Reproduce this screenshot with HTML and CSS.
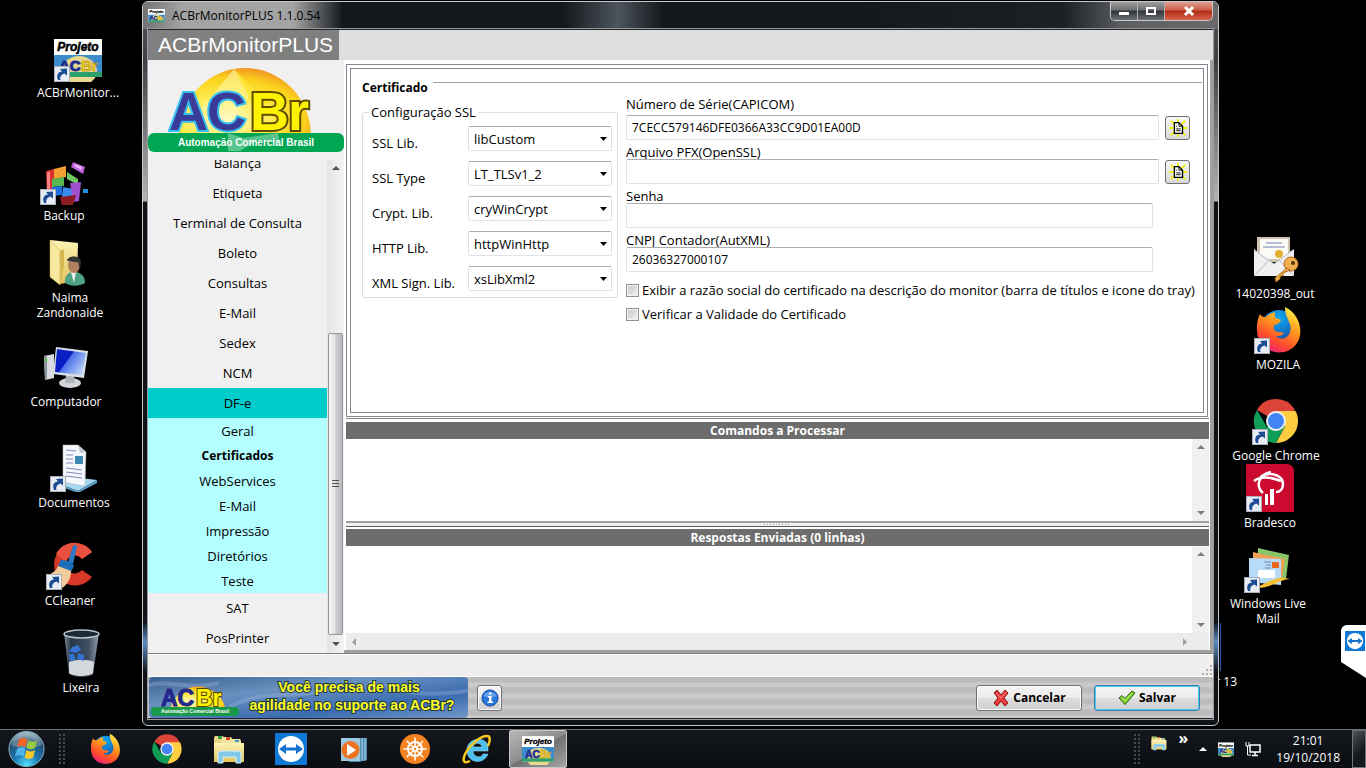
FILE: index.html
```
<!DOCTYPE html>
<html lang="pt-br">
<head>
    <meta charset="utf-8" />
    <title>ACBrMonitorPLUS 1.1.0.54</title>
    <link rel="stylesheet" href="styles.css">
</head>
<body>

    <svg class="sprite" width="0" height="0" aria-hidden="true">
        <defs>
            <radialGradient id="gSun" cx="0.35" cy="0.75" r="0.8">
                <stop offset="0" stop-color="#fffbc8" />
                <stop offset="0.45" stop-color="#ffe94a" />
                <stop offset="0.75" stop-color="#fbd21c" />
                <stop offset="1" stop-color="#f08a24" />
            </radialGradient>
            <linearGradient id="gFox" x1="0.8" y1="0" x2="0.3" y2="1">
                <stop offset="0" stop-color="#fff44a" />
                <stop offset="0.4" stop-color="#ff9a1c" />
                <stop offset="0.75" stop-color="#ff4a2c" />
                <stop offset="1" stop-color="#e8207a" />
            </linearGradient>
            <radialGradient id="gGlobe" cx="0.5" cy="0.2" r="0.9">
                <stop offset="0" stop-color="#10a8f0" />
                <stop offset="1" stop-color="#1a2f8c" />
            </radialGradient>
            <linearGradient id="gFolder" x1="0" y1="0" x2="0" y2="1">
                <stop offset="0" stop-color="#fdf3b4" />
                <stop offset="1" stop-color="#e4c45c" />
            </linearGradient>
            <radialGradient id="gOrb" cx="0.5" cy="0.95" r="0.95">
                <stop offset="0" stop-color="#4fe0ff" />
                <stop offset="0.4" stop-color="#1b74ae" />
                <stop offset="0.75" stop-color="#24506e" />
                <stop offset="1" stop-color="#a8c0cc" />
            </radialGradient>
            <linearGradient id="gScreen" x1="0" y1="0" x2="1" y2="0.6">
                <stop offset="0" stop-color="#1026c8" />
                <stop offset="0.48" stop-color="#0a1cc4" />
                <stop offset="0.5" stop-color="#4a70e8" />
                <stop offset="1" stop-color="#b4ccf8" />
            </linearGradient>
            <linearGradient id="gSky" x1="0" y1="0" x2="1" y2="1">
                <stop offset="0" stop-color="#3a6090" />
                <stop offset="0.35" stop-color="#6a90c0" />
                <stop offset="0.7" stop-color="#3a6cb0" />
                <stop offset="1" stop-color="#7498c8" />
            </linearGradient>
            <linearGradient id="gGlass" x1="0" y1="0" x2="1" y2="0">
                <stop offset="0" stop-color="#8c9aa8" />
                <stop offset="0.2" stop-color="#2c3c50" />
                <stop offset="0.7" stop-color="#44586c" />
                <stop offset="1" stop-color="#a4b0bc" />
            </linearGradient>
        </defs>

        <symbol id="shortcut" viewBox="0 0 16 16">
            <rect x="0.5" y="0.5" width="15" height="15" fill="#e8ecf2" stroke="#a8b0bc" />
            <path d="M4 14C2 9 4 6 8 5.500L6 3L13 2.500L13 9.500L10.500 7.500C7 8.500 5.500 11 6.500 14Z" fill="#1c4c94" />
        </symbol>

        <symbol id="projeto" viewBox="0 0 48 38">
            <rect width="48" height="38" fill="#fff" />
            <rect y="16" width="48" height="18" fill="#3c8ccc" />
            <ellipse cx="25" cy="32" rx="18" ry="15" fill="#e8d890" />
            <rect y="33" width="48" height="5" fill="#2ea06c" />
            <rect width="48" height="16" fill="#fff" />
            <text x="24" y="12" class="svgText" font-style="italic" font-size="12" text-anchor="middle" fill="#000" stroke="#000" stroke-width="0.500">Projeto</text>
            <text x="5" y="32" class="svgText" font-size="15" fill="#1c2c90" stroke="#1c2c90">AC</text>
            <text x="27" y="32" class="svgText" font-size="15" fill="#ffd820" stroke="#907010" stroke-width="0.500">Br</text>
        </symbol>

        <symbol id="backup" viewBox="0 0 48 48">
            <path d="M6 14L14 12V42L7 38Z" fill="#d83030" />
            <path d="M7 16L10 14V38L7 36Z" fill="#ff8080" />
            <path d="M14 12L26 9V20L14 22Z" fill="#f4a030" />
            <path d="M12 22L24 20V29L12 30Z" fill="#58b850" />
            <path d="M27 15L38 22V28L27 22Z" fill="#70c860" />
            <path d="M12 30L22 29V38L12 39Z" fill="#2070e0" />
            <path d="M23 30L33 32L31 42L22 40Z" fill="#3c8cf0" />
            <path d="M30 26L41 25L39 44L33 45Z" fill="#a050d0" />
            <path d="M20 40L36 38L33 48L22 49Z" fill="#8c1c20" />
            <path d="M33 5L45 10L43 17L31 10Z" fill="#c060e0" />
            <path d="M35 7L42 10L41 13L34 9Z" fill="#e8b8f8" />
            <rect x="43" y="32" width="6" height="4" fill="#1c94dc" />
        </symbol>

        <symbol id="userFolder" viewBox="0 0 48 48">
            <path d="M4 1L32 4L31 42L14 45L4 34Z" fill="url(#gFolder)" />
            <path d="M4 1L14 12V46L4 38Z" fill="#f8e8a0" stroke="#c8a850" stroke-width="0.500" />
            <path d="M14 12L18 10V28L14 46Z" fill="#d8b850" />
            <path d="M19 44C18 36 23 33 28 33C35 33 39 37 39 44C32 48 24 47 19 44Z" fill="#50a084" />
            <path d="M25 33L28 44L30 33Z" fill="#f0f0f0" />
            <ellipse cx="28" cy="26" rx="6" ry="8" fill="#b08060" />
            <path d="M21 22C22 16 34 16 35 23L34 30L32 23C28 24 24 21 21 22Z" fill="#333" />
        </symbol>

        <symbol id="computer" viewBox="0 0 48 48">
            <path d="M2 13L12 11V35L3 37Z" fill="#d8dce0" />
            <path d="M2 13L5 12V36L3 37Z" fill="#8c949c" />
            <circle cx="4" cy="17" r="1.500" fill="#50c840" />
            <ellipse cx="28" cy="40" rx="11" ry="5" fill="#d4d8dc" />
            <path d="M24 32H32L33 40H23Z" fill="#b0b4b8" />
            <path d="M14 4L46 8L42 35L11 31Z" fill="#d8e0e8" />
            <path d="M15 6L44 10L40 32L13 29Z" fill="url(#gScreen)" />
        </symbol>

        <symbol id="documents" viewBox="0 0 48 48">
            <path d="M4 38L22 33L47 36L28 47Z" fill="#a8d8f0" />
            <path d="M4 38L28 47L47 36V39L28 49L4 40Z" fill="#5aa0c8" />
            <path d="M13 1L28 1L36 8L35 42L13 38Z" fill="#f4f8fc" stroke="#b0b8c0" stroke-width="0.500" />
            <path d="M28 1L30 9L36 8Z" fill="#c4ccd4" />
            <path d="M16 6L26 7M16 11H23M16 15H23M16 19H23M16 24L32 26M16 28L32 30M16 32L32 34" stroke="#8488b8" stroke-width="1.200" />
            <rect x="25" y="12" width="8" height="8" fill="#3c88b4" />
        </symbol>

        <symbol id="ccleaner" viewBox="0 0 48 48">
            <path d="M46 10A21 21 0 1 0 46 35L36 28A9 9 0 1 1 36 17Z" fill="#d83828" />
            <path d="M46 10A21 21 0 0 0 10 12L20 20A9 9 0 0 1 36 17Z" fill="#e85040" />
            <path d="M27 4C29 2 31 3 31 5L27 22L22 20Z" fill="#2c78c0" />
            <path d="M15 18C20 18 26 20 28 24L25 30L12 24Z" fill="#1c70b8" />
            <path d="M12 24L25 29C25 36 22 42 16 46C10 42 4 36 0 33C6 32 10 29 12 24Z" fill="#f4cc9c" />
        </symbol>

        <symbol id="trash" viewBox="0 0 48 48">
            <path d="M7 4L12 45C16 49 32 49 36 45L42 4Z" fill="url(#gGlass)" opacity="0.900" />
            <path d="M12 33C18 30 31 30 37 33L36 44C32 48 16 48 12 44Z" fill="#d4d8dc" />
            <ellipse cx="24.500" cy="5" rx="17.500" ry="4" fill="#1c2834" stroke="#b8c4cc" stroke-width="1.500" />
            <path d="M15 18L21 16L24 21L19 24L12 23ZM21 24L27 26L27 32L20 30ZM12 25L17 25L19 31L13 32Z" fill="#3474d0" />
        </symbol>

        <symbol id="certificate" viewBox="0 0 48 48">
            <rect x="6" y="2" width="33" height="25" fill="#d0c4b0" />
            <rect x="9" y="4" width="28" height="20" fill="#fcfaf4" />
            <path d="M15 8H31M12 12H34" stroke="#9ca8d0" stroke-width="1.500" />
            <path d="M3 14L23 29L43 14V41H3Z" fill="#f0f0f2" />
            <path d="M3 41L18 25M43 41L28 25M3 15L23 29L42 15" stroke="#b8bcc0" fill="none" />
            <circle cx="28" cy="19" r="4" fill="#e0b030" />
            <circle cx="40" cy="29" r="7" fill="#f0b050" stroke="#a86818" />
            <path d="M36 33L24 43L25 47L29 44V41L32 41V38L39 35Z" fill="#f0b050" stroke="#a86818" />
            <circle cx="42" cy="28" r="2" fill="#503810" />
        </symbol>

        <symbol id="firefox" viewBox="0 0 48 48">
            <circle cx="25" cy="23" r="19" fill="url(#gGlobe)" />
            <path d="M31 1C46 8 50 27 43 37C34 51 12 49 5 34C2 26 2 16 6 8C8 11 9 11 12 11C15 8 18 7 21 6C21 9 20 11 22 12L27 14C25 18 22 19 20 19C19 24 21 26 26 26L30 27C27 31 24 30 22 30C26 35 34 33 36 26C39 17 31 14 31 1Z" fill="url(#gFox)" />
        </symbol>

        <symbol id="chrome" viewBox="0 0 48 48">
            <path d="M24 24L4.900 13A22 22 0 0 1 43.100 13Z" fill="#db4437" />
            <path d="M24 14H43.600A22 22 0 0 1 24 46L33 29Z" fill="#ffcd40" />
            <path d="M4.900 13L15 30L33 29L24 46A22 22 0 0 1 4.900 13Z" fill="#0f9d58" />
            <circle cx="24" cy="24" r="10" fill="#f1f1f1" />
            <circle cx="24" cy="24" r="8" fill="#4285f4" />
        </symbol>

        <symbol id="bradesco" viewBox="0 0 48 48">
            <path d="M0 0H40Q48 0 48 8V48H0Z" fill="#cc092f" />
            <path d="M14 14C18 7 37 9 37 20C37 25 34 28 30 28M17 29C9 22 13 10 25 8M8 17C15 12 25 13 35 17" fill="none" stroke="#fff" stroke-width="2.500" />
            <path d="M19 30H22V41H19ZM24 25H28V41H24Z" fill="#fff" />
        </symbol>

        <symbol id="liveMail" viewBox="0 0 48 48">
            <path d="M14 3L45 10L42 34L14 30Z" fill="#88c468" />
            <path d="M9 7L41 14L37 38L9 32Z" fill="#f0a054" />
            <path d="M5 13L37 14V40L5 37Z" fill="#b8dcf8" />
            <rect x="14" y="25" width="17" height="8" fill="#fff" />
            <rect x="28" y="17" width="7" height="6" fill="#e86820" />
            <path d="M20 17H27M22 20H27M21 23H27" stroke="#6c88a8" />
            <path d="M14 41C26 38 30 30 46 34C36 34 30 42 14 43Z" fill="#f8c030" />
        </symbol>

        <symbol id="teamviewer" viewBox="0 0 32 32">
            <rect width="32" height="32" fill="#0e78d4" />
            <circle cx="16" cy="16" r="13" fill="#fff" />
            <path d="M4 16L11 11V14.500H21V11L28 16L21 21V17.500H11V21Z" fill="#1272cc" />
        </symbol>

        <symbol id="explorer" viewBox="0 0 32 32">
            <path d="M1 5L2 3H10L11 5V28H1Z" fill="#e8d888" />
            <path d="M9 4H18L19 6H27L28 8V28H9Z" fill="#f0e4a0" />
            <path d="M5 3H9V6H5Z" fill="#30a040" /><path d="M13 4H17V7H13Z" fill="#d04828" /><path d="M22 7H26V9H22Z" fill="#38a0c8" />
            <path d="M1 10H31V29H1Z" fill="url(#gFolder)" />
            <path d="M5 30V20Q5 18 8 18H24Q28 18 28 20V30H23V24H10V30Z" fill="#80c8e8" stroke="#d4f0fc" />
        </symbol>

        <symbol id="mediaPlayer" viewBox="0 0 32 32">
            <path d="M18 5L30 5V27L22 29H12Z" fill="#4c8cb4" />
            <path d="M25 5V28M28 5V28" stroke="#b0d8ec" />
            <rect x="4" y="5" width="19" height="23" fill="#9cc8e0" />
            <circle cx="13.500" cy="17" r="9" fill="#ec7420" />
            <path d="M10 11L19 17L10 23Z" fill="#fff" />
        </symbol>

        <symbol id="wheel" viewBox="0 0 32 32">
            <circle cx="16" cy="16" r="15" fill="#f58220" />
            <circle cx="16" cy="16" r="7" fill="none" stroke="#fff" stroke-width="2" />
            <path d="M16 5V27M5 16H27M8.200 8.200L23.800 23.800M23.800 8.200L8.200 23.800" stroke="#fff" stroke-width="1.500" stroke-linecap="round" />
            <circle cx="16" cy="16" r="3" fill="#fff" /><circle cx="16" cy="16" r="1.200" fill="#f58220" />
        </symbol>

        <symbol id="iexplore" viewBox="0 0 32 32">
            <path d="M27 18H12C12 24 20 26 22 21H27C23 32 6 31 6 17C6 5 24 2 27 13ZM12 14H21C20 9 13 9 12 14Z" fill="#4cc0ee" stroke="#a0e4fc" stroke-width="0.500" />
            <path d="M27 13C29 8 30 3 26 3C20 2 6 14 3 24C2 28 3 31 9 28" fill="none" stroke="#f8c820" stroke-width="2.500" />
        </symbol>

        <symbol id="windowsFlag" viewBox="0 0 40 40">
            <circle cx="20" cy="20" r="18.500" fill="url(#gOrb)" stroke="#88b0c4" />
            <path d="M4 16A16.500 16.500 0 0 1 36 16C26 20 14 20 4 16Z" fill="#fff" opacity="0.250" />
            <path d="M12 10C15 8 18 8 21 10L19 18C16 16 13 16 10 18Z" fill="#f06428" />
            <path d="M22 11C25 13 28 13 31 11L29 19C26 21 23 21 20 19Z" fill="#98cc3c" />
            <path d="M10 20C13 18 16 18 19 20L17 28C14 26 11 26 8 28Z" fill="#50b4ec" />
            <path d="M20 21C23 23 26 23 29 21L27 29C24 31 21 31 18 29Z" fill="#fcc828" />
        </symbol>

        <symbol id="newDoc" viewBox="0 0 20 20">
            <path d="M2 2L18 18M18 2L2 18M10 0V20M0 10H20" stroke="#f0f000" stroke-width="2" />
            <path d="M6 4H11L15 8V16H6Z" fill="#fff" stroke="#000" stroke-width="1.500" />
            <path d="M11 4V8H15M8 8H9M8 11H13M8 13H13" stroke="#000" fill="none" />
        </symbol>
    </svg>

    <div id="desktop">
        <a href="#" class="icon acbr">
            <svg><use href="#projeto" /></svg>
            <svg class="arrow"><use href="#shortcut" /></svg>
            <span>ACBrMonitor...</span>
        </a>
        <a href="#" class="icon backup">
            <svg><use href="#backup" /></svg>
            <svg class="arrow"><use href="#shortcut" /></svg>
            <span>Backup</span>
        </a>
        <a href="#" class="icon naima">
            <svg><use href="#userFolder" /></svg>
            <span>Naima Zandonaide</span>
        </a>
        <a href="#" class="icon computador">
            <svg><use href="#computer" /></svg>
            <span>Computador</span>
        </a>
        <a href="#" class="icon documentos">
            <svg><use href="#documents" /></svg>
            <svg class="arrow"><use href="#shortcut" /></svg>
            <span>Documentos</span>
        </a>
        <a href="#" class="icon ccleaner">
            <svg><use href="#ccleaner" /></svg>
            <svg class="arrow"><use href="#shortcut" /></svg>
            <span>CCleaner</span>
        </a>
        <a href="#" class="icon lixeira">
            <svg><use href="#trash" /></svg>
            <span>Lixeira</span>
        </a>

        <a href="#" class="icon out">
            <svg><use href="#certificate" /></svg>
            <span>14020398_out</span>
        </a>
        <a href="#" class="icon mozila">
            <svg><use href="#firefox" /></svg>
            <svg class="arrow"><use href="#shortcut" /></svg>
            <span>MOZILA</span>
        </a>
        <a href="#" class="icon chrome">
            <svg><use href="#chrome" /></svg>
            <svg class="arrow"><use href="#shortcut" /></svg>
            <span>Google Chrome</span>
        </a>
        <a href="#" class="icon bradesco">
            <svg><use href="#bradesco" /></svg>
            <svg class="arrow"><use href="#shortcut" /></svg>
            <span>Bradesco</span>
        </a>
        <a href="#" class="icon livemail">
            <svg><use href="#liveMail" /></svg>
            <svg class="arrow"><use href="#shortcut" /></svg>
            <span>Windows Live Mail</span>
        </a>
        <a href="#" class="icon hiddenIcon">
            <i></i>
            <span>r 13</span>
        </a>

        <div id="tvTab">
            <svg viewBox="0 0 32 32"><use href="#teamviewer" /></svg>
        </div>

        <div id="win">
            <div class="titleBar">
                <svg class="titleIcon"><use href="#projeto" /></svg>
                <span>ACBrMonitorPLUS 1.1.0.54</span>
                <div class="winButtons">
                    <button type="button" title="Minimizar"><svg viewBox="0 0 14 12"><rect x="2" y="7" width="10" height="3" fill="#fff" /></svg></button>
                    <button type="button" title="Maximizar"><svg viewBox="0 0 14 12"><path d="M3 3H11V9H3Z" fill="none" stroke="#fff" stroke-width="2" /></svg></button>
                    <button type="button" title="Fechar" class="close"><svg viewBox="0 0 14 12"><path d="M3 2L11 10M11 2L3 10" stroke="#fff" stroke-width="3" /></svg></button>
                </div>
            </div>

            <div class="client">
                <div class="appHeader"><h1>ACBrMonitorPLUS</h1></div>

                <div class="content">
                    <div class="sidebar">
                        <svg class="logo" viewBox="0 0 196 92">
                            <path d="M31 76A66 68 0 0 1 163 76Z" fill="url(#gSun)" />
                            <path d="M86 9L106 30L90 52L52 50L86 9Z" fill="#fff9a8" opacity="0.600" />
                            <path d="M86 9L106 30L138 33L108 50Z" fill="#ffe000" opacity="0.500" />
                            <rect y="73" width="196" height="19" rx="6" fill="#00a651" />
                            <path d="M80 73L95 78L130 73L132 83L110 80L92 91L80 91Z" fill="#fff" opacity="0.350" />
                            <g class="svgText" font-size="54" fill="#3a3a98" stroke="#38c0f0" stroke-width="4" paint-order="stroke">
                                <text x="21" y="70">A</text>
                                <text x="59" y="70">C</text>
                            </g>
                            <g class="svgText" font-size="54" fill="#fff200" stroke="#5c4c00" stroke-width="4" paint-order="stroke">
                                <text x="102" y="70">B</text>
                                <text x="140" y="70">r</text>
                            </g>
                            <text x="98" y="86" class="svgText" font-size="10" fill="#fff" text-anchor="middle">Automação Comercial Brasil</text>
                        </svg>
                        <div class="menuBox">
                            <nav>
                                <a href="#">Balança</a>
                                <a href="#">Etiqueta</a>
                                <a href="#">Terminal de Consulta</a>
                                <a href="#">Boleto</a>
                                <a href="#">Consultas</a>
                                <a href="#">E-Mail</a>
                                <a href="#">Sedex</a>
                                <a href="#">NCM</a>
                                <a href="#" class="active">DF-e</a>
                                <a href="#" class="sub">Geral</a>
                                <a href="#" class="sub current">Certificados</a>
                                <a href="#" class="sub">WebServices</a>
                                <a href="#" class="sub">E-Mail</a>
                                <a href="#" class="sub">Impressão</a>
                                <a href="#" class="sub">Diretórios</a>
                                <a href="#" class="sub">Teste</a>
                                <a href="#">SAT</a>
                                <a href="#">PosPrinter</a>
                            </nav>
                            <div class="menuScroll">
                                <i class="up"></i>
                                <div class="thumb"></div>
                                <i class="down"></i>
                            </div>
                        </div>
                    </div>

                    <div class="main">
                        <div class="page">
                            <fieldset class="cert">
                                <legend>Certificado</legend>
                                <div class="columns">
                                    <fieldset class="ssl">
                                        <legend>Configuração SSL</legend>
                                        <div class="row">
                                            <label for="sslLib">SSL Lib.</label>
                                            <select id="sslLib"><option>libCustom</option></select>
                                        </div>
                                        <div class="row">
                                            <label for="sslType">SSL Type</label>
                                            <select id="sslType"><option>LT_TLSv1_2</option></select>
                                        </div>
                                        <div class="row">
                                            <label for="cryptLib">Crypt. Lib.</label>
                                            <select id="cryptLib"><option>cryWinCrypt</option></select>
                                        </div>
                                        <div class="row">
                                            <label for="httpLib">HTTP Lib.</label>
                                            <select id="httpLib"><option>httpWinHttp</option></select>
                                        </div>
                                        <div class="row">
                                            <label for="xmlLib">XML Sign. Lib.</label>
                                            <select id="xmlLib"><option>xsLibXml2</option></select>
                                        </div>
                                    </fieldset>

                                    <div class="fields">
                                        <label for="serie">Número de Série(CAPICOM)</label>
                                        <div class="inputRow">
                                            <input id="serie" type="text" value="7CECC579146DFE0366A33CC9D01EA00D" />
                                            <button type="button" title="Selecionar certificado"><svg><use href="#newDoc" /></svg></button>
                                        </div>
                                        <label for="pfx">Arquivo PFX(OpenSSL)</label>
                                        <div class="inputRow">
                                            <input id="pfx" type="text" />
                                            <button type="button" title="Selecionar arquivo"><svg><use href="#newDoc" /></svg></button>
                                        </div>
                                        <label for="senha">Senha</label>
                                        <input id="senha" type="password" class="short" />
                                        <label for="cnpj">CNPJ Contador(AutXML)</label>
                                        <input id="cnpj" type="text" class="short" value="26036327000107" />
                                        <div class="check">
                                            <input id="razao" type="checkbox" />
                                            <label for="razao">Exibir a razão social do certificado na descrição do monitor (barra de títulos e icone do tray)</label>
                                        </div>
                                        <div class="check">
                                            <input id="validade" type="checkbox" />
                                            <label for="validade">Verificar a Validade do Certificado</label>
                                        </div>
                                    </div>
                                </div>
                            </fieldset>
                        </div>

                        <div class="memo">
                            <label for="cmd" class="bar">Comandos a Processar</label>
                            <div class="memoBody">
                                <textarea id="cmd"></textarea>
                                <div class="vScroll"><i class="up"></i><i class="down"></i></div>
                            </div>
                        </div>
                        <div class="splitter"></div>
                        <div class="memo answers">
                            <label for="resp" class="bar">Respostas Enviadas (0 linhas)</label>
                            <div class="memoBody">
                                <textarea id="resp"></textarea>
                                <div class="vScroll"><i class="up"></i><i class="down"></i></div>
                            </div>
                            <div class="hScroll"><i class="left"></i><i class="right"></i></div>
                        </div>
                    </div>
                </div>

                <div class="status">
                    <svg viewBox="0 0 12 12"><path d="M9 1h2v2h-2zM5 5h2v2h-2zM9 5h2v2h-2zM1 9h2v2h-2zM5 9h2v2h-2zM9 9h2v2h-2z" fill="#b4b0b0" /></svg>
                </div>

                <div class="footer">
                    <svg class="banner" viewBox="0 0 319 41">
                        <rect width="319" height="41" rx="4" fill="url(#gSky)" />
                        <path d="M80 30C120 10 140 24 180 12M220 4C250 16 280 20 319 14M0 8C20 2 40 14 70 6" stroke="#a8c0e0" stroke-width="4" fill="none" opacity="0.300" />
                        <path d="M22 30A28 28 0 0 1 76 30Z" fill="url(#gSun)" />
                        <rect x="2" y="30" width="88" height="9" rx="4" fill="#189848" />
                        <text x="12" y="29" class="svgText" font-size="23" fill="#24288c" stroke="#24288c">AC</text>
                        <text x="47" y="29" class="svgText" font-size="23" fill="#fff200" stroke="#504800" stroke-width="2" paint-order="stroke">Br</text>
                        <text x="46" y="36" class="svgText" font-size="5" fill="#fff" text-anchor="middle">Automação Comercial Brasil</text>
                        <g class="svgText" font-size="14" fill="#ffff20" stroke="#203848" stroke-width="2" paint-order="stroke" text-anchor="middle">
                            <text x="200" y="15">Você precisa de mais</text>
                            <text x="203" y="33">agilidade no suporte ao ACBr?</text>
                        </g>
                    </svg>
                    <button type="button" class="info" title="Sobre">
                        <svg viewBox="0 0 18 18">
                            <circle cx="9" cy="9" r="8" fill="#2a78dc" stroke="#1848a0" />
                            <path d="M2.500 7A7 6.500 0 0 1 15.500 7Q9 10 2.500 7Z" fill="#8cbcf4" opacity="0.600" />
                            <path d="M8 3.500H10.500V5.500H8ZM7 7H10.500V12.500H12V14H6.500V12.500H8V8.500H7Z" fill="#fff" />
                        </svg>
                    </button>
                    <button type="button" class="btn cancel">
                        <svg viewBox="0 0 18 18"><path d="M2 4L5 1L9 6L13 1L16 4L12 9L16 14L13 17L9 12L5 17L2 14L6 9Z" fill="#ec3c3c" stroke="#8c1414" /><path d="M4 4L9 9L14 3" stroke="#f89090" fill="none" /></svg>
                        Cancelar
                    </button>
                    <button type="button" class="btn save">
                        <svg viewBox="0 0 18 18"><path d="M1 9L4 6.500L7 9.500L14 2L17 4L7 15.500Z" fill="#7cd428" stroke="#2c5c10" /><path d="M4 8.500L7 11.500L14 4" stroke="#c8f490" fill="none" /></svg>
                        Salvar
                    </button>
                </div>
            </div>
        </div>
    </div>

    <div id="taskbar">
        <button type="button" class="start" title="Iniciar"><svg><use href="#windowsFlag" /></svg></button>
        <i class="grip"></i>
        <div class="apps">
            <button type="button" title="Firefox"><svg><use href="#firefox" /></svg></button>
            <button type="button" title="Chrome"><svg><use href="#chrome" /></svg></button>
            <button type="button" title="Explorer"><svg><use href="#explorer" /></svg></button>
            <button type="button" title="TeamViewer"><svg><use href="#teamviewer" /></svg></button>
            <button type="button" title="Media Player"><svg><use href="#mediaPlayer" /></svg></button>
            <button type="button" title="Painel"><svg><use href="#wheel" /></svg></button>
            <button type="button" title="Internet Explorer"><svg><use href="#iexplore" /></svg></button>
            <button type="button" title="ACBrMonitorPLUS" class="running"><svg><use href="#projeto" /></svg></button>
        </div>
        <i class="grip"></i>
        <div class="tray">
            <svg class="small high"><use href="#explorer" /></svg>
            <span class="more">»</span>
            <i class="up"></i>
            <svg class="small"><use href="#projeto" /></svg>
            <svg class="small" viewBox="0 0 16 16"><path d="M5 4H15V11H5ZM10 11V14M7 14.500H13" fill="none" stroke="#fff" stroke-width="1.500" /><path d="M1 1V5H4V1M2.500 5V14H6" fill="none" stroke="#fff" /></svg>
        </div>
        <div class="clock">21:01<br />19/10/2018</div>
        <button type="button" class="showDesktop" title="Mostrar a área de trabalho"></button>
    </div>

</body>
</html>
```
FILE: styles.css
```
* {
    box-sizing: border-box;
}

body {
    margin: 0;
    height: 100vh;
    display: flex;
    flex-direction: column;
    background-color: #000;
    font-family: "Open Sans", "Noto Sans", sans-serif;
    font-size: 12px;
    line-height: 15px;
    color: #000;
    overflow: hidden;
}

a {
    color: inherit;
    text-decoration: none;
}

button, input, select, textarea {
    font: inherit;
    color: inherit;
    margin: 0;
    padding: 0;
}

svg {
    display: block;
    flex: none;
}

.sprite {
    position: absolute;
}

.svgText {
    font-family: "Liberation Sans", Arial, sans-serif;
    font-weight: bold;
}

/* desktop */
#desktop {
    flex: 1;
    position: relative;
    min-height: 0;
}

.icon {
    position: absolute;
    width: 100px;
    display: flex;
    flex-direction: column;
    align-items: center;
    color: #fff;
    text-align: center;
}
    .icon > svg {
        width: 48px;
        height: 48px;
    }
    .icon > svg.arrow {
        position: absolute;
        left: 26px;
        top: 32px;
        width: 16px;
        height: 16px;
    }
    .icon > span {
        margin-top: 3px;
        padding: 0 6px;
    }

.acbr { left: 28px; top: 34px; }
.backup { left: 14px; top: 157px; }
.naima { left: 20px; top: 239px; }
.computador { left: 16px; top: 343px; }
.documentos { left: 24px; top: 444px; }
.ccleaner { left: 20px; top: 542px; }
.lixeira { left: 31px; top: 629px; }
.out { right: 41px; top: 235px; }
.mozila { right: 38px; top: 306px; }
.chrome { right: 40px; top: 397px; }
.bradesco { right: 46px; top: 464px; }
.livemail { right: 48px; top: 545px; }
.hiddenIcon { right: 129px; top: 623px; width: 30px; align-items: flex-end; }
    .hiddenIcon > i {
        width: 17px;
        height: 48px;
        border-left: 1px solid #1c5ca8;
    }
    .hiddenIcon > span { padding: 0; }

#tvTab {
    position: absolute;
    right: 0;
    top: 625px;
    width: 25px;
    height: 53px;
    padding: 6px 0 0 4px;
    background-color: #fff;
    border-radius: 6px 0 0 0;
    clip-path: polygon(0 0, 100% 0, 100% 100%, 0 70%);
}
    #tvTab > svg {
        width: 20px;
        height: 20px;
    }

/* window */
#win {
    position: absolute;
    left: 142px;
    right: 147px;
    top: 1px;
    bottom: 3px;
    display: flex;
    flex-direction: column;
    padding: 0 5px 6px 5px;
    border: 1px solid #c4c8cc;
    border-radius: 6px;
    background: linear-gradient(#54585c 0, #3c4044 60px, #b4b4b4 199px, #101418 200px, #101418 620px, #5c8cc4 640px, #101418 670px);
}

.titleBar {
    display: flex;
    align-items: center;
    height: 27px;
    margin: 0 -5px;
    padding-left: 5px;
    border-radius: 5px 5px 0 0;
    background: linear-gradient(90deg, #707274 0, #a4a4a4 40px, #a4a4a4 150px, #14181c 200px, #14181c 420px, #4c545c 475px, #14181c 520px, #14181c 700px, #1c2024 920px, #5c5e60 980px, #686a6c);
}
    .titleBar > span {
        margin-left: 7px;
    }

.titleIcon {
    width: 17px;
    height: 13px;
}

.winButtons {
    display: flex;
    align-self: flex-start;
    margin-left: auto;
    margin-right: 5px;
    border: 1px solid #c8c8c8;
    border-top: none;
    border-radius: 0 0 5px 5px;
    overflow: hidden;
}
    .winButtons > button {
        display: flex;
        justify-content: center;
        align-items: center;
        width: 27px;
        height: 18px;
        border: none;
        border-right: 1px solid #b0b0b0;
        background: linear-gradient(#9c9ea0, #6c6e70 45%, #303438 50%, #6c7074);
    }
    .winButtons svg {
        width: 14px;
        height: 12px;
    }
    .winButtons > .close {
        width: 47px;
        border-right: none;
        background: linear-gradient(#e0a090, #cc5c48 45%, #b02c14 50%, #d8644c);
    }

.client {
    flex: 1;
    min-height: 0;
    display: flex;
    flex-direction: column;
    background-color: #f0f0f0;
    border: 1px solid #202428;
    border-width: 1px 0;
    outline: 1px solid #989ca0;
}

.appHeader {
    display: flex;
    background-color: #dedede;
}
    .appHeader > h1 {
        margin: 0;
        padding: 0 6px 0 10px;
        background-color: #808080;
        color: #fff;
        font: 21px/30px "Liberation Sans", Arial, sans-serif;
    }

.content {
    flex: 1;
    min-height: 0;
    display: flex;
    font-size: 13px;
    line-height: 16px;
}

/* menu */
.sidebar {
    display: flex;
    flex-direction: column;
    width: 196px;
}

.logo {
    width: 196px;
    height: 92px;
}

.menuBox {
    flex: 1;
    min-height: 0;
    display: flex;
    margin-top: 8px;
}
    .menuBox nav {
        flex: 1;
        display: flex;
        flex-direction: column;
        justify-content: flex-end;
        overflow: hidden;
        text-align: center;
        line-height: 30px;
    }
    .menuBox nav > a {
        flex: none;
    }
    .menuBox nav > .active {
        background-color: #00cccc;
    }
    .menuBox nav > .sub {
        padding-top: 1px;
        background-color: #b3ffff;
        line-height: 24px;
    }
    .menuBox nav > .current {
        font-weight: bold;
        font-size: 12px;
    }

.menuScroll {
    display: flex;
    flex-direction: column;
    justify-content: flex-end;
    align-items: center;
    width: 17px;
    background: linear-gradient(90deg, #e4e4e4, #f4f4f4);
}
    .menuScroll > .up {
        margin: 6px 0 auto 0;
    }
    .menuScroll > .down {
        margin: 7px 0;
    }

.thumb {
    width: 15px;
    height: 302px;
    border: 1px solid #949494;
    border-radius: 2px;
    background:
        repeating-linear-gradient(#505050 0, #505050 1px, transparent 1px, transparent 3px) center / 7px 8px no-repeat,
        linear-gradient(90deg, #f4f4f4, #e4e4e8 45%, #ccccd0 55%, #b8b8bc);
}

i.up, i.down {
    width: 0;
    height: 0;
    border: 4px solid transparent;
    border-top-width: 0;
    border-bottom-color: #505050;
}
i.down {
    border-width: 4px 4px 0 4px;
    border-color: #505050 transparent transparent transparent;
}
i.left, i.right {
    width: 0;
    height: 0;
    border: 4px solid transparent;
    border-left-width: 0;
    border-right-color: #808080;
}
i.right {
    border-width: 4px 0 4px 4px;
    border-color: transparent transparent transparent #808080;
}

/* main */
.main {
    flex: 1;
    min-width: 0;
    display: flex;
    flex-direction: column;
    padding: 4px 1px 0 2px;
    background-color: #fff;
    border-right: 3px solid #a0a0a0;
    border-bottom: 3px solid #a0a0a0;
}

.page {
    flex: 1;
    min-height: 0;
    margin-right: 1px;
    padding: 4px 5px 4px 15px;
    border: 1px solid #828790;
    box-shadow: inset 0 0 0 3px #fff, inset 0 0 0 4px #828790;
}

.cert {
    min-width: 0;
    margin: 0;
    padding: 0 12px 0 0;
    border: none;
    border-top: 1px solid #a0a0a0;
}
    .cert > legend {
        padding: 11px 5px 0 0;
        font-weight: bold;
        font-size: 12px;
    }

.columns {
    display: flex;
    align-items: flex-start;
    gap: 8px;
}

.ssl {
    flex: none;
    width: 256px;
    margin: 8px 0 0 0;
    padding: 6px 5px 6px 9px;
    border: 1px solid #d5dfe5;
    border-radius: 3px;
    display: flex;
    flex-direction: column;
    gap: 10px;
}
    .ssl > legend {
        margin-left: -3px;
        padding: 0 2px;
    }
    .ssl .row {
        display: flex;
        justify-content: space-between;
        align-items: flex-end;
    }

select, .fields input[type=text], .fields input[type=password] {
    height: 25px;
    border: 1px solid #dde3ea;
    border-top-color: #abadb3;
    border-radius: 2px;
    background-color: #fff;
    outline: none;
    padding: 0 5px;
}
.fields input[type=text] {
    font-size: 12px;
}

select {
    width: 144px;
    appearance: none;
    background: #fff url('data:image/svg+xml,<svg xmlns="http://www.w3.org/2000/svg" width="7" height="4"><path d="M0 0h7L3.500 4z"/></svg>') right 4px center no-repeat;
}

.fields {
    flex: 1;
    min-width: 0;
    display: flex;
    flex-direction: column;
}
    .fields > label {
        height: 14px;
        margin-top: 5px;
        line-height: 14px;
        overflow: hidden;
    }
    .fields > label:first-child {
        height: 18px;
        margin-top: 1px;
    }
    .fields > .short {
        margin-right: 37px;
    }

.inputRow {
    display: flex;
    align-items: center;
    gap: 6px;
}
    .inputRow > input {
        flex: 1;
    }
    .inputRow > button {
        display: flex;
        justify-content: center;
        align-items: center;
        width: 25px;
        height: 24px;
        border: 1px solid #707070;
        border-radius: 3px;
        background: linear-gradient(#f8f8f8, #d8d8d8);
    }
    .inputRow svg {
        width: 18px;
        height: 18px;
    }

.check {
    display: flex;
    align-items: center;
    gap: 3px;
    margin-top: 8px;
}
    .check > input {
        flex: none;
        appearance: none;
        width: 13px;
        height: 13px;
        border: 1px solid #8e8f8f;
        background: linear-gradient(135deg, #c0c4c8, #f4f4f4);
        box-shadow: inset 0 0 0 1px #f4f4f4;
    }
    .check > label {
        white-space: nowrap;
    }
    .fields > .check:nth-of-type(3) {
        margin-top: 10px;
    }

.memo {
    display: flex;
    flex-direction: column;
    height: 103px;
    margin-top: 1px;
    padding-top: 3px;
    border-top: 1px solid #828790;
}
    .memo > .bar {
        background-color: #6d6d6d;
        color: #fff;
        font-weight: bold;
        font-size: 12px;
        text-align: center;
        line-height: 17px;
    }

.memoBody {
    flex: 1;
    min-height: 0;
    display: flex;
}
    .memoBody > textarea {
        flex: 1;
        border: none;
        outline: none;
        resize: none;
    }

.answers {
    height: 123px;
    margin-top: 0;
    padding-top: 2px;
    border-top: none;
}

.vScroll {
    display: flex;
    flex-direction: column;
    justify-content: space-between;
    align-items: center;
    width: 17px;
    padding: 6px 0;
    background-color: #f0f0f0;
}

.hScroll {
    display: flex;
    justify-content: space-between;
    align-items: center;
    height: 17px;
    padding: 0 22px 0 6px;
    background-color: #ececec;
}

.memo i {
    opacity: 0.7;
}

.splitter {
    height: 6px;
    border-top: 2px solid #a0a0a0;
    border-bottom: 1px solid #5c5c5c;
    background: repeating-linear-gradient(90deg, #a0a0a0 0, #a0a0a0 1px, transparent 1px, transparent 3px) center / 27px 1px no-repeat #f0f0f0;
}

.status {
    display: flex;
    justify-content: flex-end;
    align-items: flex-end;
    height: 24px;
    border-top: 1px solid #808080;
    border-bottom: 1px solid #fff;
    background-color: #f0eded;
    box-shadow: inset 0 1px #fff;
}
    .status > svg {
        width: 12px;
        height: 12px;
    }

.footer {
    display: flex;
    align-items: center;
    height: 41px;
    padding: 0 13px 0 1px;
    background: repeating-linear-gradient(#bcbcbc 0, #bcbcbc 5px, #cacaca 6px, #cacaca 10px, #b4b4b4 11px);
}

.banner {
    width: 319px;
    height: 41px;
}

.footer button {
    display: flex;
    justify-content: center;
    align-items: center;
    gap: 3px;
    width: 106px;
    height: 26px;
    border: 1px solid #707070;
    border-radius: 3px;
    background: linear-gradient(#f4f4f4, #ebebeb 48%, #dddddd 52%, #cfcfcf);
    box-shadow: inset 0 0 0 1px #fcfcfc;
    font-weight: bold;
}
.footer svg:not(.banner) {
    width: 18px;
    height: 18px;
}
.footer > .info {
    width: 25px;
    margin-left: 9px;
    margin-right: auto;
}
.footer > .save {
    margin-left: 12px;
    border-color: #3c7fb1;
    box-shadow: inset 0 0 0 1px #48c8f0;
}

/* taskbar */
#taskbar {
    display: flex;
    align-items: center;
    height: 39px;
    padding-left: 7px;
    border-top: 1px solid #6c7074;
    background: linear-gradient(#14181e, #0a0e12);
    color: #fff;
}
    #taskbar button {
        display: flex;
        justify-content: center;
        align-items: center;
        border: none;
        background: none;
    }

.start svg {
    width: 39px;
    height: 38px;
}

.grip {
    width: 8px;
    height: 32px;
    margin-left: 12px;
    background: radial-gradient(circle, #484c52 1px, transparent 1px) 0 0 / 4px 4px;
}

.apps {
    flex: 1;
    display: flex;
    margin-left: 9px;
}
    .apps > button {
        width: 60px;
        height: 38px;
        margin-right: 2px;
    }
    .apps svg {
        width: 32px;
        height: 32px;
    }
    #taskbar .running {
        width: 58px;
        border: 1px solid #c8c8c8;
        border-radius: 2px;
        background: linear-gradient(150deg, #b8b8b8, #8c8c8c 50%, #707070 52%, #a4a4a4);
    }

.tray {
    display: flex;
    align-items: center;
    gap: 11px;
    margin-left: 10px;
}
    .tray > .small {
        width: 16px;
        height: 16px;
    }
    .tray > .high, .tray > .more {
        align-self: flex-start;
        margin-bottom: 12px;
    }
    .tray > .more {
        font-size: 16px;
        font-weight: bold;
        line-height: 6px;
    }
    .tray > .up {
        border-bottom-color: #fff;
    }

.clock {
    margin: 0 12px 0 15px;
    text-align: center;
    line-height: 17px;
}

#taskbar .showDesktop {
    width: 14px;
    height: 38px;
    border: 1px solid #707478;
    background: linear-gradient(135deg, #50545a, #14181c 60%);
}
```
